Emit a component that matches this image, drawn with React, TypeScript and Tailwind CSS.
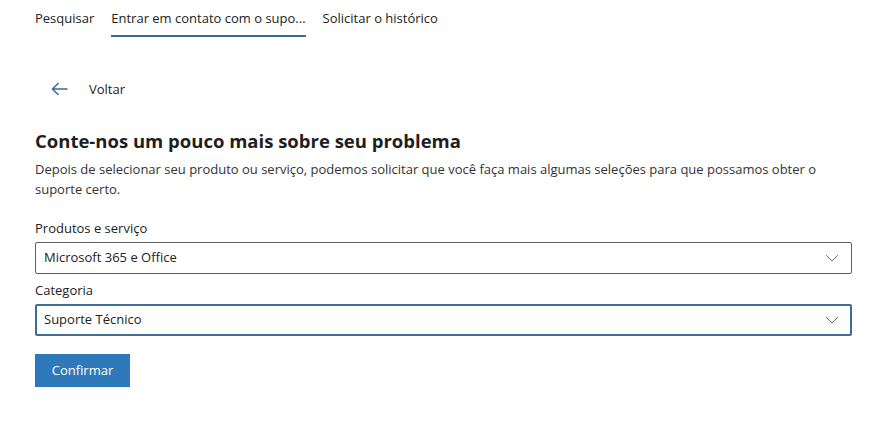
const font = { fontFamily: '"Segoe UI", "Open Sans", "Noto Sans", sans-serif' };

function Chevron() {
  return (
    <svg width="14" height="8" viewBox="0 0 14 8" fill="none" stroke="#6b6b6b" strokeWidth={1}>
      <path d="M1 1l6 6 6-6" />
    </svg>
  );
}

function Select({ value, focused }: { value: string; focused?: boolean }) {
  return (
    <div
      className={`flex items-center justify-between h-8 rounded-[2px] ${
        focused ? "border-2 border-[#3f6d94] pl-[7px] pr-[11px]" : "border border-[#5f5f5f] pl-[8px] pr-[12px]"
      }`}
    >
      <span className="text-[13px] text-[#222]">{value}</span>
      <Chevron />
    </div>
  );
}

export default function App() {
  return (
    <div className="w-[875px] h-[444px] bg-white text-[#222] px-[35px]" style={font}>
      {/* Tabs */}
      <div className="flex gap-[17px] text-[13px] text-[#222]">
        <div className="pt-[9px] pb-[8px]">Pesquisar</div>
        <div className="pt-[9px] pb-[6px] border-b-2 border-[#3d6a8f] whitespace-nowrap">
          Entrar em contato com o supo...
        </div>
        <div className="pt-[9px] pb-[8px]">Solicitar o histórico</div>
      </div>

      {/* Back */}
      <div className="flex items-center mt-[43px] ml-[16px] gap-[21px]">
        <svg width="17" height="14" viewBox="0 0 17 14" fill="none" stroke="#3b6b98" strokeWidth={1.5}>
          <path d="M16.5 7H1.5M7.5 1L1.5 7l6 6" />
        </svg>
        <span className="text-[13px]">Voltar</span>
      </div>

      {/* Heading */}
      <h1 className="mt-[29px] text-[18.5px] font-bold leading-[26px] text-[#1e1e1e]">
        Conte-nos um pouco mais sobre seu problema
      </h1>
      <p className="mt-[6px] text-[13px] leading-[19.5px] text-[#333] max-w-[805px]">
        Depois de selecionar seu produto ou serviço, podemos solicitar que você faça mais algumas seleções para que
        possamos obter o suporte certo.
      </p>

      {/* Form */}
      <div className="mt-[19px] text-[13px] leading-[20px]">Produtos e serviço</div>
      <div className="mt-[4px] w-[817px]">
        <Select value="Microsoft 365 e Office" />
      </div>
      <div className="mt-[6px] text-[13px] leading-[20px]">Categoria</div>
      <div className="mt-[4px] w-[817px]">
        <Select value="Suporte Técnico" focused />
      </div>

      <button className="mt-[18px] h-[33px] w-[95px] bg-[#2e79b9] text-white text-[13px]">Confirmar</button>
    </div>
  );
}
